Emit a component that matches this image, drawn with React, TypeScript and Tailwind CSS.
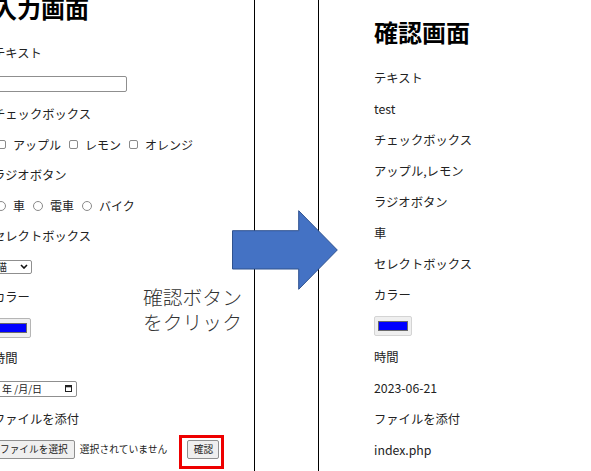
import type { ReactElement, ReactNode } from "react";

const jp = '"Noto Sans CJK JP", "Noto Sans", sans-serif';

function LeftRow({ children }: { children: ReactNode }): ReactElement {
  return <div className="flex h-[30.5px] items-center whitespace-nowrap">{children}</div>;
}

function RightRow({ children }: { children: ReactNode }): ReactElement {
  return <div className="flex h-[31px] items-center whitespace-nowrap">{children}</div>;
}

function Check({ label }: { label: string }): ReactElement {
  return (
    <label className="mr-[4px] flex items-center">
      <input
        className="ml-[4px] mr-[7px] h-[9px] w-[9px] appearance-none rounded-[2px] border border-[#8a8a8a] bg-white"
        type="checkbox"
      />
      <span className="text-[12px]">{label}</span>
    </label>
  );
}

function Radio({ label }: { label: string }): ReactElement {
  return (
    <label className="mr-[5px] flex items-center">
      <input
        className="ml-[3px] mr-[7px] h-[10px] w-[10px] appearance-none rounded-full border border-[#8a8a8a] bg-white"
        name="vehicle"
        type="radio"
      />
      <span className="text-[12px]">{label}</span>
    </label>
  );
}

function ColorSwatch({ border }: { border: string }): ReactElement {
  return (
    <div
      className={`flex h-[20px] w-[38px] items-center justify-center rounded-[2px] border bg-[#efefef] ${border}`}
    >
      <div className="h-[10px] w-[30px] border border-[#6b6b6b] bg-[#0000ff]" />
    </div>
  );
}

function InputPanel(): ReactElement {
  return (
    <div className="-ml-[7px] flex flex-col text-[12.3px] text-[#222]">
      <h1 className="-mt-[4px] h-[24px] text-[24px] font-bold leading-[24px] text-black">入力画面</h1>
      <div className="mt-[17.75px] flex flex-col">
        <LeftRow>テキスト</LeftRow>
        <LeftRow>
          <input
            className="h-[16px] w-[134px] rounded-[2px] border border-[#8f8f8f] bg-white"
            type="text"
          />
        </LeftRow>
        <LeftRow>チェックボックス</LeftRow>
        <LeftRow>
          <Check label="アップル" />
          <Check label="レモン" />
          <Check label="オレンジ" />
        </LeftRow>
        <LeftRow>ラジオボタン</LeftRow>
        <LeftRow>
          <Radio label="車" />
          <Radio label="電車" />
          <Radio label="バイク" />
        </LeftRow>
        <LeftRow>セレクトボックス</LeftRow>
        <LeftRow>
          <div className="flex h-[14px] w-[39px] items-center justify-between rounded-[2px] border border-[#8f8f8f] bg-white pl-[3px] pr-[3px] text-[10px]">
            <span>猫</span>
            <svg className="h-[5px] w-[8px]" viewBox="0 0 8 5" fill="none">
              <path d="M1 1l3 3 3-3" stroke="#111" strokeWidth="1.6" />
            </svg>
          </div>
        </LeftRow>
        <LeftRow>カラー</LeftRow>
        <LeftRow>
          <ColorSwatch border="border-[#b5b5b5]" />
        </LeftRow>
        <LeftRow>時間</LeftRow>
        <LeftRow>
          <div className="flex h-[16px] w-[84px] items-center justify-between rounded-[2px] border border-[#8f8f8f] bg-white pl-[8px] pr-[4px] text-[10px]">
            <span>年 /月/日</span>
            <svg className="h-[7px] w-[7px]" viewBox="0 0 7 7" fill="none">
              <rect x="0.5" y="0.5" width="6" height="6" stroke="#222" />
              <rect x="0.5" y="0.5" width="6" height="1.8" fill="#222" />
            </svg>
          </div>
        </LeftRow>
        <LeftRow>ファイルを添付</LeftRow>
        <LeftRow>
          <button
            className="h-[19px] rounded-[2px] border border-[#8f8f8f] bg-[#efefef] px-[6px] text-[9.7px] leading-none"
            type="button"
          >
            ファイルを選択
          </button>
          <span className="ml-[5px] text-[9.8px]">選択されていません</span>
          <div className="ml-[12px] mt-[5px] flex border-[3px] border-[#ee0000] pb-[7px] pl-[5px] pr-[2px] pt-[2px]">
            <button
              className="h-[19px] w-[32px] rounded-[2px] border border-[#8f8f8f] bg-[#efefef] text-[9.7px] leading-none"
              type="submit"
            >
              確認
            </button>
          </div>
        </LeftRow>
      </div>
    </div>
  );
}

function ConfirmPanel(): ReactElement {
  return (
    <div className="flex flex-col text-[12.3px] text-[#222]">
      <h1 className="mt-[20px] h-[24px] text-[24px] font-bold leading-[24px] text-black">確認画面</h1>
      <div className="mt-[18.5px] flex flex-col">
        <RightRow>テキスト</RightRow>
        <RightRow>test</RightRow>
        <RightRow>チェックボックス</RightRow>
        <RightRow>アップル,レモン</RightRow>
        <RightRow>ラジオボタン</RightRow>
        <RightRow>車</RightRow>
        <RightRow>セレクトボックス</RightRow>
        <RightRow>カラー</RightRow>
        <RightRow>
          <ColorSwatch border="border-[#d4d4d4]" />
        </RightRow>
        <RightRow>時間</RightRow>
        <RightRow>2023-06-21</RightRow>
        <RightRow>ファイルを添付</RightRow>
        <RightRow>index.php</RightRow>
      </div>
    </div>
  );
}

export default function App(): ReactElement {
  return (
    <div
      className="relative flex h-[471px] w-[591px] overflow-hidden bg-white"
      style={{ fontFamily: jp }}
    >
      <div className="w-[255px] shrink-0 overflow-hidden border-r border-black">
        <InputPanel />
      </div>
      <div className="w-[64px] shrink-0 border-r border-black" />
      <div className="flex-1 pl-[55px]">
        <ConfirmPanel />
      </div>

      {/* annotation: arrow + caption */}
      <svg
        className="absolute left-[232px] top-[210px] h-[80px] w-[106px]"
        viewBox="0 0 106 80"
        fill="none"
      >
        <path
          d="M0.5 20.7H66.7V0.7L105.3 40L66.7 79.3V59H0.5Z"
          fill="#4472C4"
          stroke="#2F528F"
          strokeWidth="1"
        />
      </svg>
      <p className="absolute left-[143px] top-[284px] text-[19.8px] font-light leading-[25px] text-[#333]">
        確認ボタン
        <br />
        をクリック
      </p>
    </div>
  );
}
